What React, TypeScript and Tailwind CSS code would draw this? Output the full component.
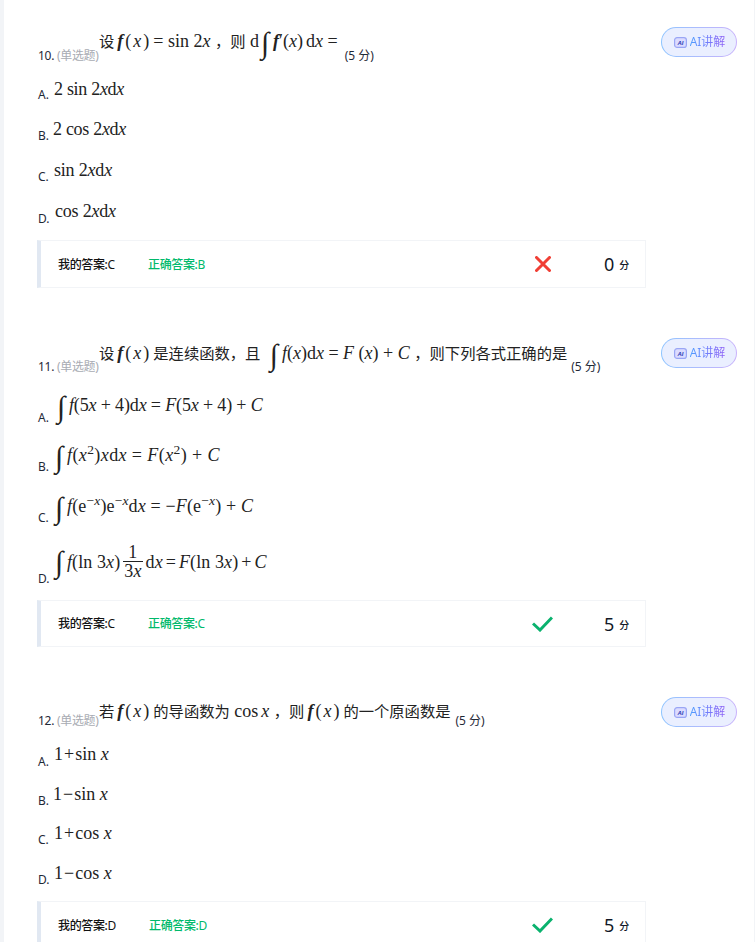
import React from 'react';

const sans = 'font-["Noto_Sans","Noto_Sans_CJK_SC",sans-serif]';
const serif = 'font-["Liberation_Serif","Noto_Sans_CJK_SC",serif]';

const Int = () => (
  <span className="inline-block w-[10px] ml-[1px] mr-[3px] text-center text-[30px] leading-[24px] align-[-6px] tracking-normal font-['Liberation_Serif',serif]">∫</span>
);

const F = ({ c = 'f' }: { c?: string }) => <i className="font-medium">{c}</i>;

// f(x) as it is set in the question stems, wider than in the options
const Fx = () => (
  <span className="inline-block w-[34px] ml-[3px] mr-[2px] tracking-[2px] whitespace-nowrap">
    <i className="font-bold">f</i>(<i>x</i>)
  </span>
);

const Cn = ({ children }: { children: React.ReactNode }) => (
  <span className="text-[15.3px] tracking-normal font-['Noto_Sans_CJK_SC',sans-serif]">{children}</span>
);

const Plus = ({ sign }: { sign: string }) => <span className="mx-[1px]">{sign}</span>;

interface OptionRow {
  key: string;
  rowClass: string;
  mathClass: string;
  math: React.ReactNode;
}

interface QuestionProps {
  num: string;
  headClass: string;
  stemClass: string;
  scoreClass: string;
  stem: React.ReactNode;
  options: OptionRow[];
  barClass: string;
  mine: string;
  correct: string;
  mineClass: string;
  correctClass: string;
  ok: boolean;
  points: string;
}

const AiButton = () => (
  <div className="self-start shrink-0 w-[76px] h-[30px] rounded-full p-px bg-linear-to-r from-[#8cc4ff] to-[#c9b2fb]">
    <div className="w-full h-full rounded-full bg-[#eaefff] flex items-center justify-center gap-[3px] pl-[1px]">
      <svg width="13" height="11" viewBox="0 0 13 11">
        <rect x="0.6" y="0.6" width="11.8" height="9.8" rx="2.5" fill="#dcdcff" stroke="#9aa6f5" strokeWidth="1.2" />
        <text x="6.5" y="7.5" textAnchor="middle" fontSize="6" fontWeight="700" fontStyle="italic" fill="#2b3bb5" fontFamily="Liberation Sans">AI</text>
      </svg>
      <span className={`${sans} text-[12px] leading-[16px] bg-linear-to-r from-[#4c9dff] to-[#8a5cf6] bg-clip-text text-transparent`}>AI讲解</span>
    </div>
  </div>
);

const Question = ({ num, headClass, stemClass, scoreClass, stem, options, barClass, mine, correct, mineClass, correctClass, ok, points }: QuestionProps) => (
  <section>
    {/* Stem */}
    <div className={`flex justify-between pr-[17px] ${headClass}`}>
      <div className="flex items-end pl-[1px]">
        <span className={`${sans} text-[12px] leading-[14px] text-[#1f2937] w-[62px] whitespace-nowrap tracking-[-0.3px]`}>
          {num}. <span className="text-[#a8abb2]">(单选题)</span>
        </span>
        <span className={`${serif} text-[18px] leading-[24px] text-[#222] whitespace-nowrap ${stemClass}`}>{stem}</span>
        <span className={`${sans} text-[12px] leading-[14px] text-[#1f2937] whitespace-nowrap ${scoreClass}`}>(5 分)</span>
      </div>
      <AiButton />
    </div>

    {/* Options */}
    {options.map((o) => (
      <div key={o.key} className={`flex items-end pl-[1px] ${o.rowClass}`}>
        <span className={`${sans} text-[12px] leading-[14px] text-[#1f2937] w-[16px]`}>{o.key}.</span>
        <span className={`${serif} text-[18px] leading-[22px] text-[#222] whitespace-nowrap ${o.mathClass}`}>{o.math}</span>
      </div>
    ))}

    {/* Answer bar */}
    <div className={`flex items-center w-[609px] mt-[14px] pl-[17px] border-l-4 border-l-[#e1e8f2] border-y border-r border-[#f2f4f7] box-border ${barClass}`}>
      <span className={`${sans} mt-px text-[12px] tracking-[-0.35px] text-[#111] whitespace-nowrap ${mineClass}`}>
        <span className="font-medium">我的答案:</span>{mine}
      </span>
      <span className={`${sans} mt-px text-[12px] tracking-[-0.35px] text-[#00b96b] whitespace-nowrap ${correctClass}`}>
        <span className="font-medium">正确答案:</span>{correct}
      </span>
      <span className="w-[21px] h-[20px] flex items-center justify-center shrink-0">
        {ok ? (
          <svg width="21" height="16" viewBox="0 0 21 16" fill="none">
            <path d="M1 7.5 L8 14 L20 1.5" stroke="#0ab26e" strokeWidth="3" strokeLinejoin="miter" />
          </svg>
        ) : (
          <svg width="16" height="16" viewBox="0 0 16 16" fill="none">
            <path d="M1.5 1.5 L14.5 14.5 M14.5 1.5 L1.5 14.5" stroke="#f03f35" strokeWidth="3" strokeLinecap="round" />
          </svg>
        )}
      </span>
      <span className={`${sans} ml-[51px] text-[18px] leading-[20px] font-normal text-[#111827]`}>{points}</span>
      <span className={`${sans} ml-[5px] mt-[3px] text-[10px] font-medium text-[#111827]`}>分</span>
    </div>
  </section>
);

const App = () => {
  return (
    <div className="w-[755px] h-[942px] overflow-hidden bg-white border-l-4 border-r border-[#f2f4f7] box-border pl-[33px] pt-[27px]">
      <Question
        num="10"
        headClass="h-[36px]"
        stemClass="mb-[8px] -ml-[1px]"
        scoreClass="ml-[7px]"
        stem={<><Cn>设</Cn><Fx />= sin 2<i>x</i> <Cn>，则</Cn> d<Int /><i className="font-bold">f</i>′(<i>x</i>)<span className="ml-[3px]">d</span><i>x</i> =</>}
        options={[
          { key: 'A', rowClass: 'h-[39px]', mathClass: 'mb-[2px] tracking-[-0.3px]', math: <>2 sin 2<i>x</i>d<i>x</i></> },
          { key: 'B', rowClass: 'h-[41px]', mathClass: 'mb-[3px] -ml-[1px] tracking-[-0.3px]', math: <>2 cos 2<i>x</i>d<i>x</i></> },
          { key: 'C', rowClass: 'h-[41px]', mathClass: 'mb-[3px] tracking-[-0.2px]', math: <>sin 2<i>x</i>d<i>x</i></> },
          { key: 'D', rowClass: 'h-[42px]', mathClass: 'mb-[4px] ml-[1px] tracking-[-0.2px]', math: <>cos 2<i>x</i>d<i>x</i></> },
        ]}
        barClass="h-[48px]"
        mine="C"
        correct="B"
        mineClass="w-[90px]"
        correctClass="w-[384px]"
        ok={false}
        points="0"
      />
      <div className="h-[50px]" />
      <Question
        num="11"
        headClass="h-[36px]"
        stemClass="mb-[7px] -ml-[1px]"
        scoreClass="ml-[4px]"
        stem={<><Cn>设</Cn><Fx /><Cn>是连续函数，且</Cn> <span className="ml-[3px]"><Int /></span><F />(<i>x</i>)d<i>x</i> = <i>F</i> (<i>x</i>) + <i>C</i> <Cn>，则下列各式正确的是</Cn></>}
        options={[
          { key: 'A', rowClass: 'h-[51px]', mathClass: 'mb-[6px] ml-[1px] tracking-[-0.15px]', math: <><Int /><F />(5<i>x</i> + 4)d<i>x</i> = <i>F</i>(5<i>x</i> + 4) + <i>C</i></> },
          { key: 'B', rowClass: 'h-[49px]', mathClass: 'mb-[5px] -ml-[1px] tracking-[0.4px]', math: <><Int /><F />(<i>x</i><sup>2</sup>)<i>x</i>d<i>x</i> = <i>F</i>(<i>x</i><sup>2</sup>) + <i>C</i></> },
          { key: 'C', rowClass: 'h-[51px]', mathClass: 'mb-[5px] -ml-[1px] tracking-[0.15px]', math: <><Int /><F />(e<sup>−<i>x</i></sup>)e<sup>−<i>x</i></sup>d<i>x</i> = −<i>F</i>(e<sup>−<i>x</i></sup>) + <i>C</i></> },
          {
            key: 'D',
            rowClass: 'h-[61px]',
            mathClass: 'mb-[6px] -ml-[1px] tracking-[0.1px]',
            math: (
              <span className="inline-flex items-center">
                <Int /><F />(ln 3<i>x</i>)
                <span className="inline-flex flex-col items-center mx-[3px] leading-[18px]">
                  <span>1</span>
                  <span className="border-t border-[#222] px-[1px]">3<i>x</i></span>
                </span>
                d<i>x</i><span className="mx-[3px]">=</span><i>F</i>(ln 3<i>x</i>)<span className="mx-[3px]">+</span><i>C</i>
              </span>
            ),
          },
        ]}
        barClass="h-[47px]"
        mine="C"
        correct="C"
        mineClass="w-[90px]"
        correctClass="w-[384px]"
        ok
        points="5"
      />
      <div className="h-[50px]" />
      <Question
        num="12"
        headClass="h-[31px]"
        stemClass="mb-[5px] -ml-[1px]"
        scoreClass="ml-[5px]"
        stem={<><Cn>若</Cn><Fx /><Cn>的导函数为</Cn> cos<i className="ml-[3px]">x</i> <Cn>，则</Cn><Fx /><Cn>的一个原函数是</Cn></>}
        options={[
          { key: 'A', rowClass: 'h-[41px]', mathClass: 'mb-[4px]', math: <>1<Plus sign="+" />sin <i>x</i></> },
          { key: 'B', rowClass: 'h-[39px]', mathClass: 'mb-[3px] -ml-[1px]', math: <>1<Plus sign="−" />sin <i>x</i></> },
          { key: 'C', rowClass: 'h-[39px]', mathClass: 'mb-[3px]', math: <>1<Plus sign="+" />cos <i>x</i></> },
          { key: 'D', rowClass: 'h-[40px]', mathClass: 'mb-[3px]', math: <>1<Plus sign="−" />cos <i>x</i></> },
        ]}
        barClass="h-[48px]"
        mine="D"
        correct="D"
        mineClass="w-[91px]"
        correctClass="w-[383px]"
        ok
        points="5"
      />
    </div>
  );
};

export default App;
